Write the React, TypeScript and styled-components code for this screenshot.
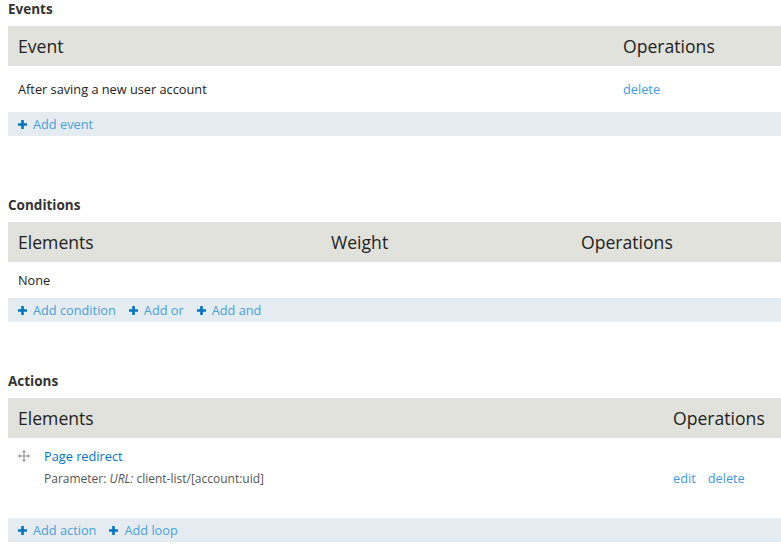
import React from "react";
import styled, { createGlobalStyle } from "styled-components";

const Global = createGlobalStyle`
  html, body { margin: 0; padding: 0; background: #fff; }
  body {
    font-family: "Open Sans", "Liberation Sans", sans-serif;
    font-size: 12.75px;
    color: #222;
  }
`;

const Page = styled.div`
  padding: 0 0 0 8px;
  width: 773px;
`;

const Section = styled.section<{ $gap: number }>`
  margin-bottom: ${(p) => p.$gap}px;
`;

const Heading = styled.h2`
  margin: 0 0 8px;
  height: 18px;
  line-height: 18px;
  font-size: 13.5px;
  font-weight: 700;
  color: #333;
`;

const Grid = styled.div<{ $cols: string }>`
  display: grid;
  grid-template-columns: ${(p) => p.$cols};
`;

const HeadCell = styled.div`
  background: #e1e2dc;
  height: 40px;
  line-height: 40px;
  padding: 0 10px;
  font-size: 17.6px;
  font-weight: 400;
  color: #222;
  white-space: nowrap;
`;

const Cell = styled.div<{ $h: number; $top?: number; $gap?: number }>`
  min-height: ${(p) => p.$h}px;
  padding: ${(p) => (p.$top !== undefined ? `${p.$top}px 10px 0` : "0 10px")};
  box-sizing: border-box;
  display: flex;
  align-items: ${(p) => (p.$top !== undefined ? "flex-start" : "center")};
  gap: ${(p) => p.$gap ?? 14}px;
  line-height: 18px;
  white-space: nowrap;
`;

const OpLink = styled.a`
  color: #3f9be0;
  text-decoration: none;
`;

const AddBar = styled.div`
  background: #e4ecf2;
  height: 24px;
  display: flex;
  align-items: center;
  gap: 13px;
  padding: 0 10px;
`;

const AddLink = styled.a`
  display: inline-flex;
  align-items: center;
  gap: 6px;
  color: #4a9fd8;
  text-decoration: none;
`;

const Element = styled.div`
  display: flex;
  gap: 14px;
  align-items: flex-start;
`;

const ElementText = styled.div`
  display: flex;
  flex-direction: column;
  gap: 5px;
`;

const ElementTitle = styled.a`
  color: #0074bd;
  text-decoration: none;
`;

const Param = styled.div`
  color: #555;
  font-size: 12px;
  em { font-style: italic; }
`;

const Handle = styled.span`
  display: inline-flex;
  padding-top: 3px;
`;

const Plus = () => (
  <svg width="9" height="9" viewBox="0 0 9 9">
    <path d="M3.2 0h2.6v3.2H9v2.6H5.8V9H3.2V5.8H0V3.2h3.2z" fill="#0074bd" />
  </svg>
);

const Move = () => (
  <svg width="12" height="12" viewBox="0 0 12 12">
    <g fill="#8a8a8a">
      <rect x="5.5" y="1" width="1" height="10" />
      <rect x="1" y="5.5" width="10" height="1" />
      <path d="M6 0l2 2.2H4z" />
      <path d="M6 12l2-2.2H4z" />
      <path d="M0 6l2.2-2v4z" />
      <path d="M12 6l-2.2-2v4z" />
    </g>
  </svg>
);

const Add = ({ label }: { label: string }) => (
  <AddLink href="#">
    <Plus />
    {label}
  </AddLink>
);

export default function App() {
  return (
    <Page>
      <Global />
      <Section $gap={60}>
        <Heading>Events</Heading>
        <Grid $cols="605px 168px">
          <HeadCell>Event</HeadCell>
          <HeadCell>Operations</HeadCell>
          <Cell $h={46}>After saving a new user account</Cell>
          <Cell $h={46}>
            <OpLink href="#">delete</OpLink>
          </Cell>
        </Grid>
        <AddBar>
          <Add label="Add event" />
        </AddBar>
      </Section>

      <Section $gap={50}>
        <Heading>Conditions</Heading>
        <Grid $cols="313px 250px 210px">
          <HeadCell>Elements</HeadCell>
          <HeadCell>Weight</HeadCell>
          <HeadCell>Operations</HeadCell>
          <Cell $h={36}>None</Cell>
          <Cell $h={36} />
          <Cell $h={36} />
        </Grid>
        <AddBar>
          <Add label="Add condition" />
          <Add label="Add or" />
          <Add label="Add and" />
        </AddBar>
      </Section>

      <Section $gap={0}>
        <Heading>Actions</Heading>
        <Grid $cols="655px 118px">
          <HeadCell>Elements</HeadCell>
          <HeadCell>Operations</HeadCell>
          <Cell $h={80} $top={9}>
            <Element>
              <Handle>
                <Move />
              </Handle>
              <ElementText>
                <ElementTitle href="#">Page redirect</ElementTitle>
                <Param>
                  Parameter: <em>URL:</em> client-list/[account:uid]
                </Param>
              </ElementText>
            </Element>
          </Cell>
          <Cell $h={80} $gap={12}>
            <OpLink href="#">edit</OpLink>
            <OpLink href="#">delete</OpLink>
          </Cell>
        </Grid>
        <AddBar>
          <Add label="Add action" />
          <Add label="Add loop" />
        </AddBar>
      </Section>
    </Page>
  );
}
